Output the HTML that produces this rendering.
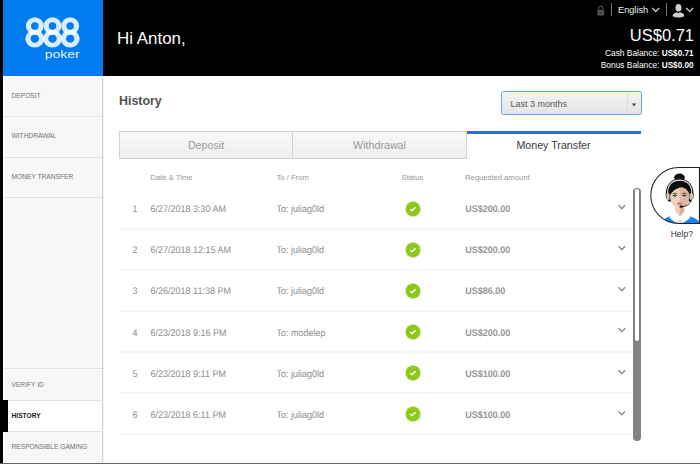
<!DOCTYPE html>
<html lang="en">
<head>
<meta charset="utf-8">
<title>888poker - History</title>
<style>
html,body{margin:0;padding:0;}
body{width:700px;height:464px;overflow:hidden;position:relative;background:#fff;font-family:"Liberation Sans",Arial,sans-serif;color:#888;}
.abs{position:absolute;}
.t{position:absolute;white-space:nowrap;line-height:1;}
#leftbar{left:0;top:0;width:3px;height:464px;background:#000;}
#bottombar{left:0;top:463px;width:700px;height:1px;background:#666;}
#logo{left:3px;top:0;width:100px;height:76px;background:#007bf0;}
#header{left:103px;top:0;width:597px;height:76px;background:#000;}
#sidebar{left:5px;top:78px;width:97px;height:384px;background:#f7f7f7;border-right:1px solid #d9d9d9;box-shadow:1px 0 0 #efefef;}
.sline{position:absolute;left:3px;width:99px;height:1px;background:#e2e2e2;border-bottom:1px solid #fcfcfc;}
.sitem{font-size:6.65px;color:#6f6f6f;left:11.5px;}
.hd{font-size:7.65px;color:#969696;}
.c{font-size:9px;color:#8c8c8c;transform:scaleY(1.07);transform-origin:0 55%;text-rendering:geometricPrecision;}
.amt{font-weight:bold;color:#959595;}
.rline{position:absolute;left:119px;width:513px;height:1.8px;background:#f5f5f5;}
</style>
</head>
<body>
<div class="abs" id="logo">
<svg width="100" height="76" viewBox="3 0 100 76" style="position:absolute;left:0;top:0">
  <g fill="#fff" fill-opacity="0.86" fill-rule="evenodd" transform="translate(0.1 0.55)">
    <path d="M25.80 25.5a8.9 8.9 0 1 0 17.8 0a8.9 8.9 0 1 0 -17.8 0zM30.95 25.5a3.75 3.75 0 1 0 7.5 0a3.75 3.75 0 1 0 -7.5 0z"/>
    <path d="M25.20 38.15a9.5 8.8 0 1 0 19.0 0a9.5 8.8 0 1 0 -19.0 0zM30.50 38.15a4.2 4.1 0 1 0 8.4 0a4.2 4.1 0 1 0 -8.4 0z"/>
    <path d="M43.50 25.5a8.9 8.9 0 1 0 17.8 0a8.9 8.9 0 1 0 -17.8 0zM48.65 25.5a3.75 3.75 0 1 0 7.5 0a3.75 3.75 0 1 0 -7.5 0z"/>
    <path d="M42.90 38.15a9.5 8.8 0 1 0 19.0 0a9.5 8.8 0 1 0 -19.0 0zM48.20 38.15a4.2 4.1 0 1 0 8.4 0a4.2 4.1 0 1 0 -8.4 0z"/>
    <path d="M61.20 25.5a8.9 8.9 0 1 0 17.8 0a8.9 8.9 0 1 0 -17.8 0zM66.35 25.5a3.75 3.75 0 1 0 7.5 0a3.75 3.75 0 1 0 -7.5 0z"/>
    <path d="M60.60 38.15a9.5 8.8 0 1 0 19.0 0a9.5 8.8 0 1 0 -19.0 0zM65.90 38.15a4.2 4.1 0 1 0 8.4 0a4.2 4.1 0 1 0 -8.4 0z"/>
  </g>
  <text x="44.7" y="57.8" font-family="Liberation Sans, Arial, sans-serif" font-size="11.3" fill="#fff" fill-opacity="0.93" textLength="35" lengthAdjust="spacingAndGlyphs">poker</text>
</svg>
</div>
<div class="abs" id="header">
  <div class="t" style="left:14px;top:30.6px;font-size:16.95px;color:#fff;">Hi Anton,</div>
</div>
<div class="abs" id="sidebar"></div>
<div class="abs" id="leftbar"></div>

<!-- sidebar -->
<div class="sline" style="top:116px"></div>
<div class="sline" style="top:157px"></div>
<div class="sline" style="top:197px"></div>
<div class="sline" style="top:368px"></div>
<div class="abs" style="left:3px;top:401px;width:99px;height:31px;background:#fff;"></div>
<div class="sline" style="top:400px"></div>
<div class="sline" style="top:431px"></div>
<div class="abs" style="left:3px;top:400px;width:5px;height:32px;background:#000;"></div>
<div class="t sitem" style="top:92.5px">DEPOSIT</div>
<div class="t sitem" style="top:133px">WITHDRAWAL</div>
<div class="t sitem" style="top:173.5px">MONEY TRANSFER</div>
<div class="t sitem" style="top:381.9px">VERIFY ID</div>
<div class="t sitem" style="top:413.3px;color:#1a1a1a;font-weight:bold;">HISTORY</div>
<div class="t sitem" style="top:444.4px">RESPONSIBLE GAMING</div>

<!-- top right -->
<div class="t" style="right:6px;top:27px;font-size:16.5px;color:#fff;">US$0.71</div>
<div class="t" style="right:6.4px;top:48.9px;font-size:8.4px;color:#fff;">Cash Balance: <b style="font-size:8.2px">US$0.71</b></div>
<div class="t" style="right:6.4px;top:60.8px;font-size:8.4px;color:#fff;">Bonus Balance: <b style="font-size:8.2px">US$0.00</b></div>
<div class="t" style="left:618px;top:6.3px;font-size:9.2px;color:#f0f0f0;">English</div>
<div class="abs" style="left:611px;top:3px;width:1px;height:13px;background:#777;"></div>
<div class="abs" style="left:666px;top:3px;width:1px;height:13px;background:#777;"></div>
<svg class="abs" style="left:594px;top:2.6px" width="14" height="16" viewBox="0 0 14 16">
  <path d="M4.6 7.2V5.4a2.1 2.1 0 0 1 4.2 0V7.2" fill="none" stroke="#666" stroke-width="1"/>
  <rect x="3.4" y="7" width="6.6" height="5.6" rx="0.8" fill="#555"/>
  <path d="M5.3 9.7l1 1 1.7-1.9" fill="none" stroke="#000" stroke-width="0.8"/>
</svg>
<svg class="abs" style="left:651px;top:6px" width="10" height="8" viewBox="0 0 10 8"><path d="M1.2 1.9L4.7 5.6 8.2 1.9" fill="none" stroke="#c4c4c4" stroke-width="1.4"/></svg>
<svg class="abs" style="left:685.3px;top:6px" width="10" height="8" viewBox="0 0 10 8"><path d="M1.2 1.9L4.7 5.6 8.2 1.9" fill="none" stroke="#c4c4c4" stroke-width="1.4"/></svg>
<svg class="abs" style="left:671.1px;top:2.6px" width="15.4" height="15.4" viewBox="0 0 14 14">
  <ellipse cx="6.8" cy="4.3" rx="2.75" ry="3.5" fill="#d0d0d0"/>
  <path d="M1.5 12.1c0-2.5 2.1-3.1 3.8-3.7l1.5 0.6 1.5-0.6c1.7 0.6 3.8 1.2 3.8 3.7-1.7 0.9-3.5 1.2-5.3 1.2s-3.6-0.3-5.3-1.2z" fill="#d0d0d0"/>
</svg>

<!-- content -->
<div class="t" style="left:119px;top:95.2px;font-size:12.4px;font-weight:bold;color:#505050;">History</div>

<div class="abs" style="left:501.4px;top:91.4px;width:140.2px;height:23.9px;box-sizing:border-box;border:1.5px solid #5ea7ef;border-radius:2.5px;background:linear-gradient(#f4f4f4,#e4e4e4);"></div>
<div class="abs" style="left:627px;top:93px;width:1px;height:21px;background:#dadada;"></div>
<div class="t" style="left:510.5px;top:100.3px;font-size:9px;color:#5a5a5a;">Last 3 months</div>
<svg class="abs" style="left:630.2px;top:101.6px" width="8" height="6" viewBox="0 0 8 6"><path d="M1.6 1.6h4.8L4 4.4z" fill="#555"/></svg>

<!-- tabs -->
<div class="abs" style="left:119px;top:131px;width:348px;height:28px;box-sizing:border-box;border:1px solid #d3d3d3;background:linear-gradient(#f8f8f8,#eeeeee);"></div>
<div class="abs" style="left:292.4px;top:132px;width:1px;height:26px;background:#d0d0d0;"></div>
<div class="abs" style="left:466.6px;top:131.4px;width:174.2px;height:2.4px;background:#0a7cf0;"></div>
<div class="t" style="left:119px;width:174px;text-align:center;top:140px;font-size:10.7px;color:#999;">Deposit</div>
<div class="t" style="left:292.5px;width:174px;text-align:center;top:140px;font-size:10.7px;color:#999;">Withdrawal</div>
<div class="t" style="left:466.5px;width:174px;text-align:center;top:140px;font-size:10.7px;color:#3a3a3a;">Money Transfer</div>

<!-- table header -->
<div class="t hd" style="left:150.5px;top:173.6px;">Date &amp; Time</div>
<div class="t hd" style="left:276.5px;top:173.6px;">To / From</div>
<div class="t hd" style="left:401.6px;top:173.6px;">Status</div>
<div class="t hd" style="left:465px;top:173.6px;">Requested amount</div>

<div id="rows"></div>
<svg width="0" height="0" style="position:absolute"><defs><g id="badge"><polygon points="7.70,0.00 6.72,1.34 7.11,2.95 5.70,3.81 5.44,5.44 3.81,5.70 2.95,7.11 1.34,6.72 0.00,7.70 -1.34,6.72 -2.95,7.11 -3.81,5.70 -5.44,5.44 -5.70,3.81 -7.11,2.95 -6.72,1.34 -7.70,0.00 -6.72,-1.34 -7.11,-2.95 -5.70,-3.81 -5.44,-5.44 -3.81,-5.70 -2.95,-7.11 -1.34,-6.72 -0.00,-7.70 1.34,-6.72 2.95,-7.11 3.81,-5.70 5.44,-5.44 5.70,-3.81 7.11,-2.95 6.72,-1.34" fill="#8cc81a" stroke="#8cc81a" stroke-width="0.4" stroke-linejoin="round"/><path d="M-2.7 0.2L-1.15 1.75 2.6 -1.8" fill="none" stroke="#fff" stroke-width="1.5"/></g><path id="chev" d="M2.55 2.2L5.8 5.75 9.05 2.2" fill="none" stroke="#8c8c8c" stroke-width="1.45"/></defs></svg>
<div class="t c" style="left:132.6px;top:205.3px;">1</div>
<div class="t c" style="left:150.5px;top:205.3px;">6/27/2018 3:30 AM</div>
<div class="t c" style="left:276.6px;top:205.3px;">To: juliag0ld</div>
<div class="t c amt" style="left:465.2px;top:205.3px;">US$200.00</div>
<svg class="abs" style="left:403.65px;top:199.50px" width="18" height="18" viewBox="-9 -9 18 18"><use href="#badge"/></svg>
<svg class="abs" style="left:615.6px;top:203.05px" width="12" height="8" viewBox="0 0 12 8"><use href="#chev"/></svg>
<div class="rline" style="top:227.9px"></div>
<div class="t c" style="left:132.6px;top:246.3px;">2</div>
<div class="t c" style="left:150.5px;top:246.3px;">6/27/2018 12:15 AM</div>
<div class="t c" style="left:276.6px;top:246.3px;">To: juliag0ld</div>
<div class="t c amt" style="left:465.2px;top:246.3px;">US$200.00</div>
<svg class="abs" style="left:403.65px;top:240.64px" width="18" height="18" viewBox="-9 -9 18 18"><use href="#badge"/></svg>
<svg class="abs" style="left:615.6px;top:244.19px" width="12" height="8" viewBox="0 0 12 8"><use href="#chev"/></svg>
<div class="rline" style="top:268.8px"></div>
<div class="t c" style="left:132.6px;top:287.3px;">3</div>
<div class="t c" style="left:150.5px;top:287.3px;">6/26/2018 11:38 PM</div>
<div class="t c" style="left:276.6px;top:287.3px;">To: juliag0ld</div>
<div class="t c amt" style="left:465.2px;top:287.3px;">US$86.00</div>
<svg class="abs" style="left:403.65px;top:281.78px" width="18" height="18" viewBox="-9 -9 18 18"><use href="#badge"/></svg>
<svg class="abs" style="left:615.6px;top:285.33px" width="12" height="8" viewBox="0 0 12 8"><use href="#chev"/></svg>
<div class="rline" style="top:310.0px"></div>
<div class="t c" style="left:132.6px;top:328.8px;">4</div>
<div class="t c" style="left:150.5px;top:328.8px;">6/23/2018 9:16 PM</div>
<div class="t c" style="left:276.6px;top:328.8px;">To: modelep</div>
<div class="t c amt" style="left:465.2px;top:328.8px;">US$200.00</div>
<svg class="abs" style="left:403.65px;top:322.92px" width="18" height="18" viewBox="-9 -9 18 18"><use href="#badge"/></svg>
<svg class="abs" style="left:615.6px;top:326.47px" width="12" height="8" viewBox="0 0 12 8"><use href="#chev"/></svg>
<div class="rline" style="top:351.1px"></div>
<div class="t c" style="left:132.6px;top:370px;">5</div>
<div class="t c" style="left:150.5px;top:370px;">6/23/2018 9:11 PM</div>
<div class="t c" style="left:276.6px;top:370px;">To: juliag0ld</div>
<div class="t c amt" style="left:465.2px;top:370px;">US$100.00</div>
<svg class="abs" style="left:403.65px;top:364.06px" width="18" height="18" viewBox="-9 -9 18 18"><use href="#badge"/></svg>
<svg class="abs" style="left:615.6px;top:367.61px" width="12" height="8" viewBox="0 0 12 8"><use href="#chev"/></svg>
<div class="rline" style="top:392.3px"></div>
<div class="t c" style="left:132.6px;top:411.1px;">6</div>
<div class="t c" style="left:150.5px;top:411.1px;">6/23/2018 6:11 PM</div>
<div class="t c" style="left:276.6px;top:411.1px;">To: juliag0ld</div>
<div class="t c amt" style="left:465.2px;top:411.1px;">US$100.00</div>
<svg class="abs" style="left:403.65px;top:405.20px" width="18" height="18" viewBox="-9 -9 18 18"><use href="#badge"/></svg>
<svg class="abs" style="left:615.6px;top:408.75px" width="12" height="8" viewBox="0 0 12 8"><use href="#chev"/></svg>
<div class="rline" style="top:433.4px"></div>
<!-- scrollbar -->
<div class="abs" style="left:632.9px;top:187.7px;width:8.3px;height:253.2px;background:#828282;border-radius:4.2px;"></div>
<div class="abs" style="left:634.65px;top:189.45px;width:4.8px;height:151.8px;background:#fff;border-radius:2.4px;"></div>

<!-- help -->
<svg class="abs" style="left:648px;top:164px" width="52" height="64" viewBox="648 164 52 64">
<defs><clipPath id="hc"><path d="M700 167.4H678.9a28.1 28.1 0 0 0 0 56.2H700z"/></clipPath></defs>
<g clip-path="url(#hc)">
<rect x="648" y="164" width="52" height="64" fill="#fff"/>
<!-- shirt -->
<path d="M660 226c1-6 6-9 13-10.5l6.7 3 6.7-3c7 1.5 12 4 14 8v3z" fill="#1c80ea"/>
<!-- neck -->
<path d="M675.3 205h8.9v8l-4.45 4.5-4.45-4.5z" fill="#efcbb6"/>
<path d="M679.75 205h4.45v8l-4.45 4.5z" fill="#d9ad98"/>
<!-- collar -->
<path d="M670.8 214l4.5-2.6 4.45 5.2 4.45-5.2 4.7 2.6 1.3 4-6.7 4.8-3.75-3-3.75 3-6.5-4.8z" fill="#fff"/>
<path d="M679.7 219.8l-3.2 2.4v1.5h6.4v-1.5z" fill="#dcdcdc"/>
<!-- hair back -->
<ellipse cx="679.5" cy="177.3" rx="5.3" ry="3.7" fill="#0d0d0d"/>
<path d="M665.9 198c-1.5-11.5 4.5-19.600 13.700-19.600s15.300 8.1 13.800 19.600l-2.800 3.5h-21.9z" fill="#0d0d0d"/>
<!-- face -->
<path d="M670.1 192c0-5 4.1-8.5 9.600-8.5s9.6 3.5 9.6 8.5v5c0 5-4 11.5-9.6 11.5s-9.600-6.5-9.600-11.5z" fill="#f2d0bc"/>
<path d="M679.7 183.5c5.5 0 9.6 3.5 9.6 8.5v5c0 5-4 11.5-9.6 11.5z" fill="#dfb5a0"/>
<!-- fringe -->
<path d="M669.4 197c-1-8 2-14.5 10.2-15.5 7.2-.5 10.7 4.5 10.5 14.5-1.5-5.2-4.2-8-8.3-8.8-5 .6-10.2 3.8-12.4 9.8z" fill="#0d0d0d"/>
<!-- headband -->
<path d="M667.6 194.5c-.6-9 4.4-14.4 12-14.4s12.8 5.4 12.2 14.4" fill="none" stroke="#e6e6e6" stroke-width="1.05"/>
<rect x="666.4" y="193" width="3.2" height="7" rx="1.5" fill="#c8c8c8"/>
<rect x="689.7" y="193" width="3.2" height="7" rx="1.5" fill="#c8c8c8"/>
<!-- eyes -->
<path d="M672.7 193.7q2.2-1.2 4.4 0M682.2 193.7q2.2-1.2 4.4 0" fill="none" stroke="#222" stroke-width="0.7"/>
<ellipse cx="674.9" cy="196.1" rx="2.2" ry="1.35" fill="#fff"/><ellipse cx="684.3" cy="196.1" rx="2.2" ry="1.35" fill="#fff"/>
<circle cx="674.9" cy="196.1" r="1.2" fill="#44637f"/><circle cx="684.3" cy="196.1" r="1.2" fill="#44637f"/>
<path d="M672.6 195.7q2.3-1.7 4.6 0M682 195.7q2.3-1.7 4.6 0" fill="none" stroke="#111" stroke-width="0.8"/>
<!-- lips -->
<ellipse cx="679.5" cy="203.8" rx="2.5" ry="1.2" fill="#d9727c"/>
<!-- mic -->
<path d="M691.3 199.5c-.5 4.3-4.5 6.8-9.3 7.2" fill="none" stroke="#111" stroke-width="0.9"/>
<ellipse cx="681.3" cy="206.7" rx="1.9" ry="1.1" fill="#111"/>
</g>
<path d="M699.45 167.4H678.9a28.1 28.1 0 0 0 0 56.2H699.45z" fill="none" stroke="#222" stroke-width="1.05"/>
</svg>
<div class="t" style="left:670.7px;top:229.5px;font-size:8.5px;color:#333;">Help?</div>

<div class="abs" id="bottombar"></div>
</body>
</html>
